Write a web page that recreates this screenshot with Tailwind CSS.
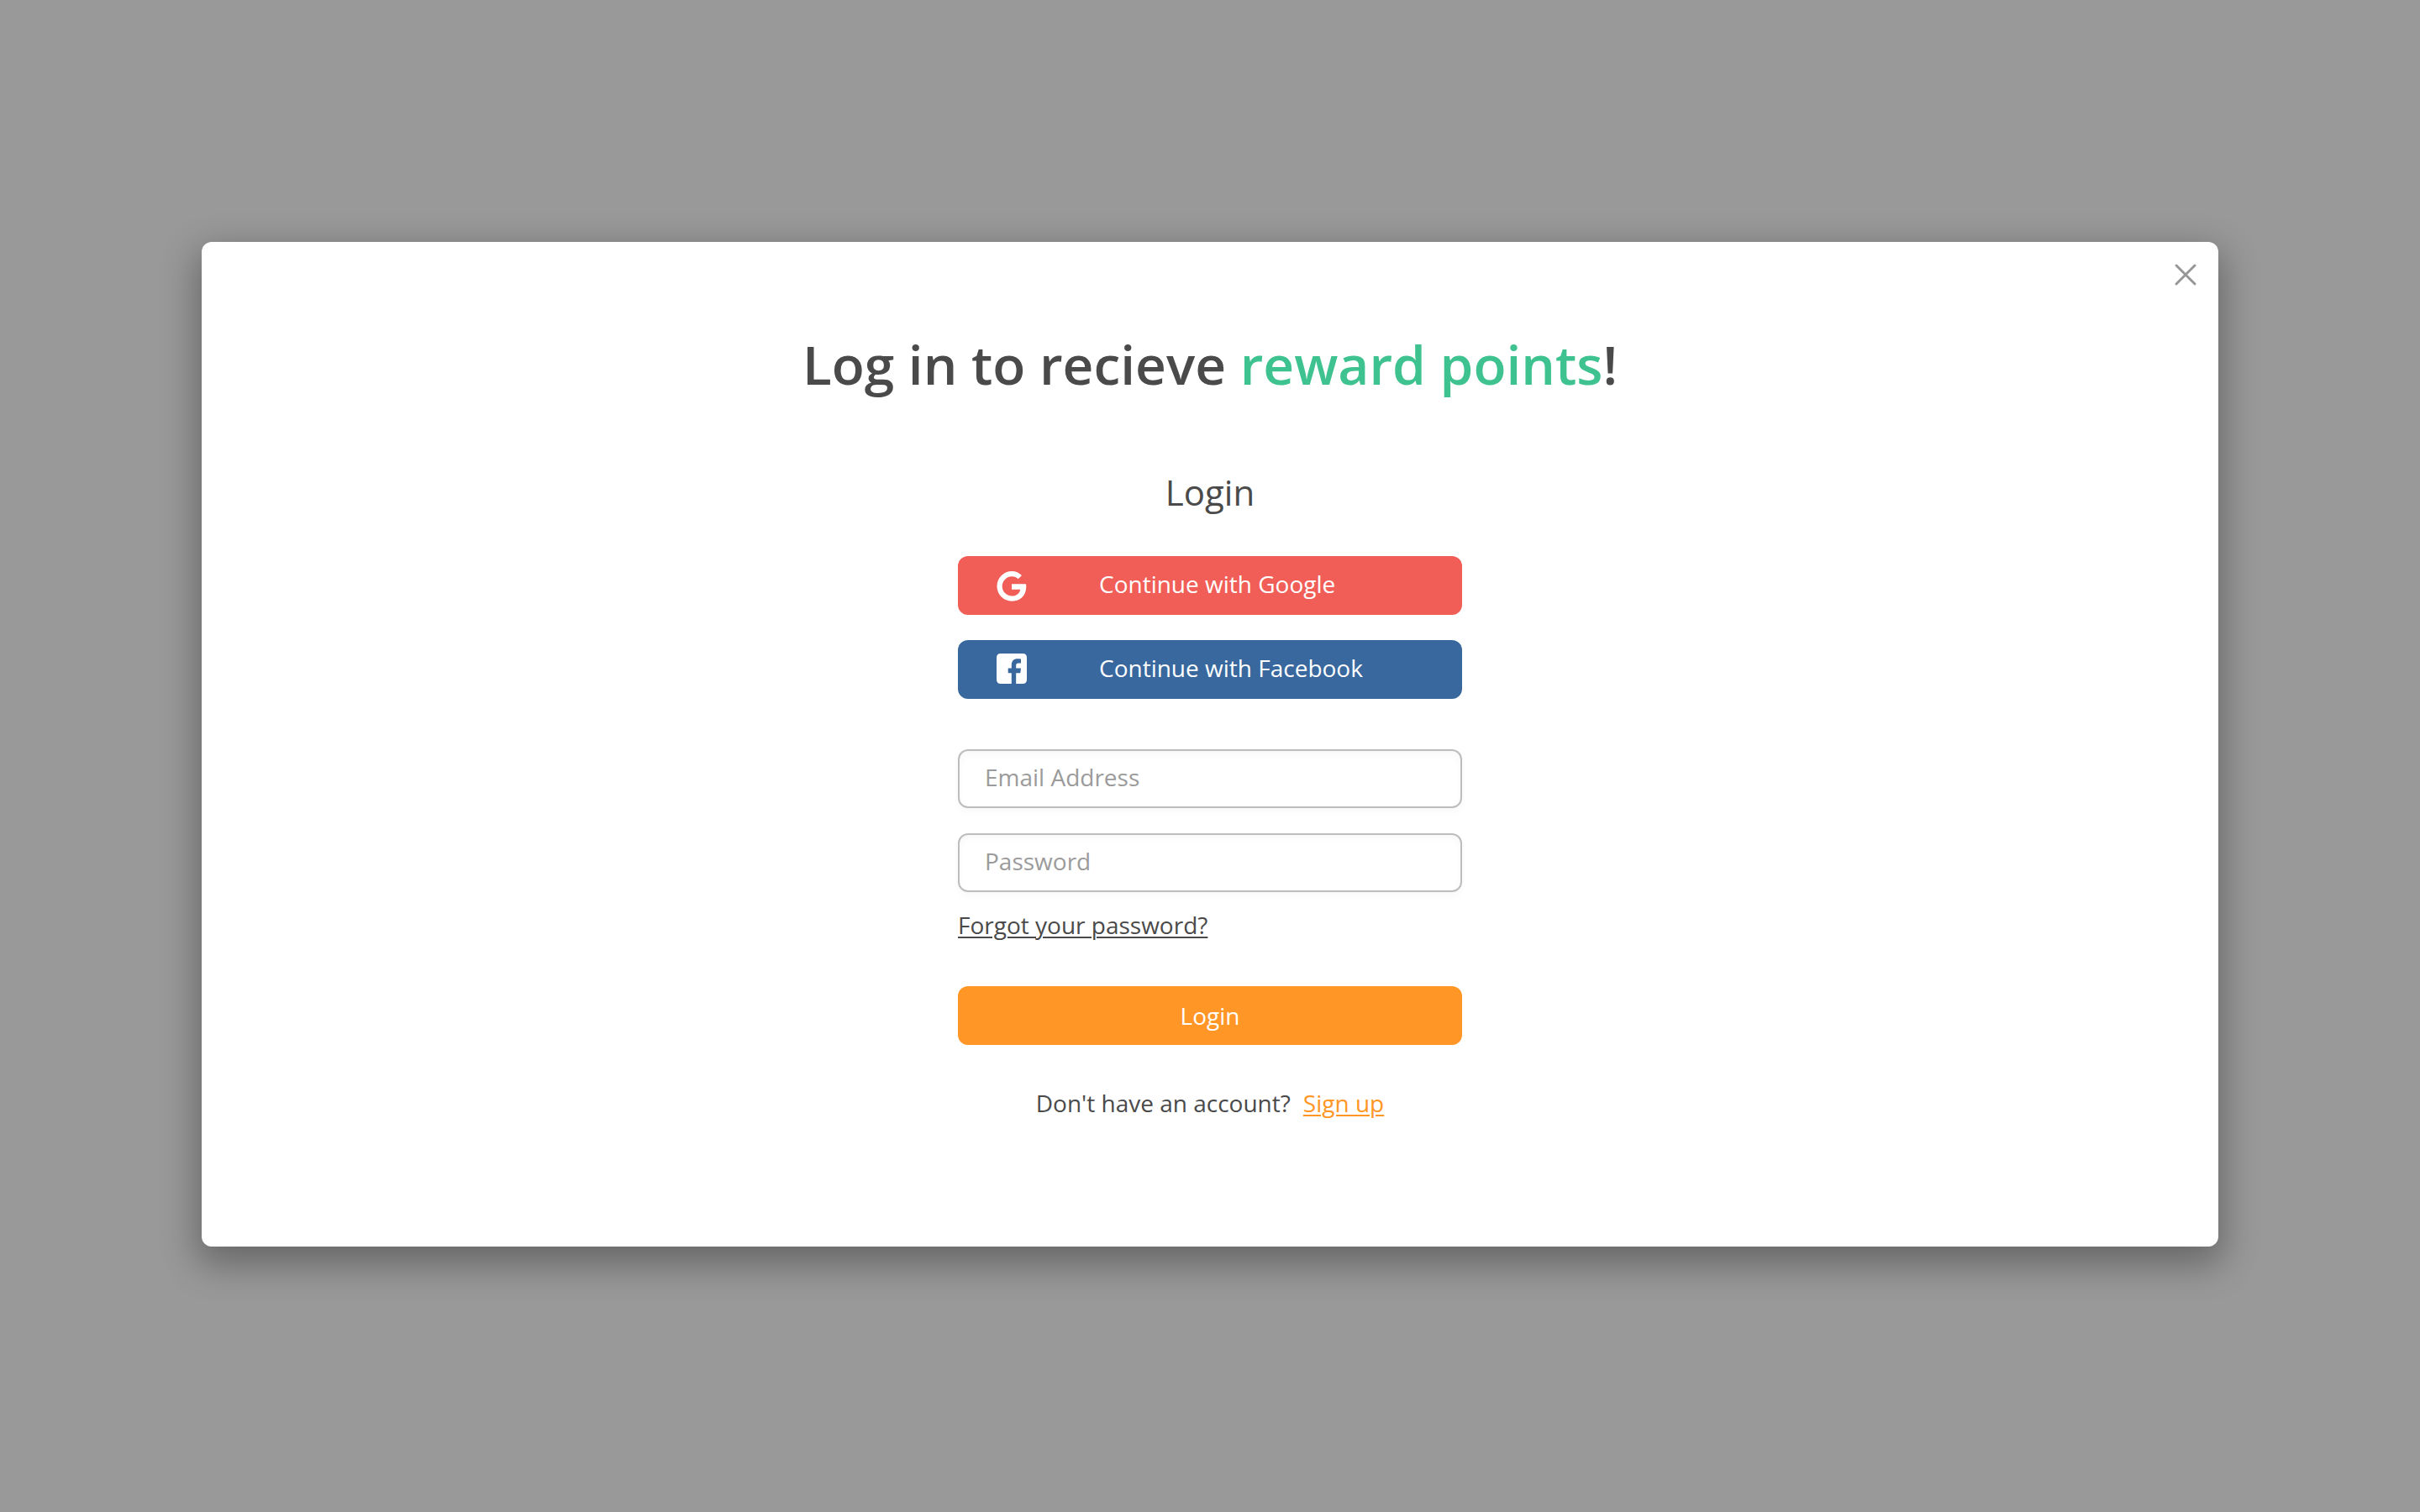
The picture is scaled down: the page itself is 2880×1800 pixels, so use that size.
<!DOCTYPE html>
<html lang="en">
<head>
<meta charset="utf-8">
<meta name="viewport" content="width=device-width, initial-scale=1">
<title>Log in</title>
<script src="https://cdn.jsdelivr.net/npm/@tailwindcss/browser@4"></script>
</head>
<body class="min-h-screen bg-[#999999] pt-72 font-['Open_Sans',sans-serif] text-[28px] leading-[38px] text-[#4a4a4a]">
  <main role="dialog" aria-labelledby="title" class="relative mx-auto flex w-5/6 flex-col items-center rounded-xl bg-white px-8 pt-25 pb-38 shadow-[0_16px_44px_6px_rgba(0,0,0,0.32)]">
    <button type="button" aria-label="Close" class="absolute top-6 right-6 size-[30px] text-[#979797]">
      <svg viewBox="0 0 30 30" fill="none" stroke="currentColor" stroke-width="3" stroke-linecap="round" class="size-full"><path d="M4 4 26 26M26 4 4 26"/></svg>
    </button>
    <h1 id="title" class="text-center text-[64px] leading-[92px] font-semibold">Log in to recieve <span class="text-[#3ec28f]">reward points</span>!</h1>
    <h2 class="mt-[74px] text-[42px] leading-[64px]">Login</h2>
    <form class="mt-11 flex w-full max-w-[600px] flex-col">
      <div class="flex flex-col gap-[30px]">
        <button type="button" class="flex h-[70px] items-center gap-[86px] rounded-xl bg-[#f15e57] pl-[46px] text-white">
          <svg viewBox="0 -1 36 36" fill="currentColor" class="size-9 overflow-visible"><path d="M30 5 25.7 9.3C23.8 7.5 21.3 6.3 18.3 6.3A11.6 11.6 0 0 0 18.3 29.5C24 29.5 27.4 26.3 28.2 21.7H18V15.3H35C35.2 16.3 35.3 17.3 35.3 18.3 35.3 29 28.3 35.7 18.3 35.7A17.85 17.85 0 0 1 18.3 0C22.9 0 27 1.9 30 5Z"/></svg>
          <span class="pb-1">Continue with Google</span>
        </button>
        <button type="button" class="flex h-[70px] items-center gap-[86px] rounded-xl bg-[#39689e] pb-[2px] pl-[46px] text-white">
          <svg viewBox="0 0 36 36" fill="currentColor" class="size-9"><path d="M5 0H31Q36 0 36 5V31Q36 36 31 36H23.2V23.3H28.3L29 17.5H23.2V14.5C23.2 12.7 23.7 11.6 26 11.6H29V6.4C28.4 6.3 26.5 6.2 24.8 6.2 20.6 6.2 17.8 8.7 17.8 13.5V17.5H13.7V23.3H17.8V36H5Q0 36 0 31V5Q0 0 5 0Z"/></svg>
          <span class="pb-[2px]">Continue with Facebook</span>
        </button>
      </div>
      <div class="mt-[60px] flex flex-col gap-[30px]">
        <input type="email" aria-label="Email Address" placeholder="Email Address" class="h-[70px] w-full rounded-xl border-2 border-[#bdbdbd] bg-white px-[30px] pb-1 shadow-[0_4px_10px_rgba(0,0,0,0.03),inset_0_4px_10px_rgba(0,0,0,0.03)] placeholder:text-[#9b9b9b]">
        <input type="password" aria-label="Password" placeholder="Password" class="h-[70px] w-full rounded-xl border-2 border-[#bdbdbd] bg-white px-[30px] pb-1 shadow-[0_4px_10px_rgba(0,0,0,0.03),inset_0_4px_10px_rgba(0,0,0,0.03)] placeholder:text-[#9b9b9b]">
      </div>
      <a href="#" class="mt-5 self-start underline decoration-2 underline-offset-3">Forgot your password?</a>
      <button type="submit" class="mt-[54px] h-[70px] rounded-xl bg-[#ff9625] text-white">Login</button>
    </form>
    <p class="mt-[50px] flex gap-[15px]">Don't have an account? <a href="#" class="text-[#ff9625] underline decoration-2 underline-offset-3">Sign up</a></p>
  </main>
</body>
</html>
